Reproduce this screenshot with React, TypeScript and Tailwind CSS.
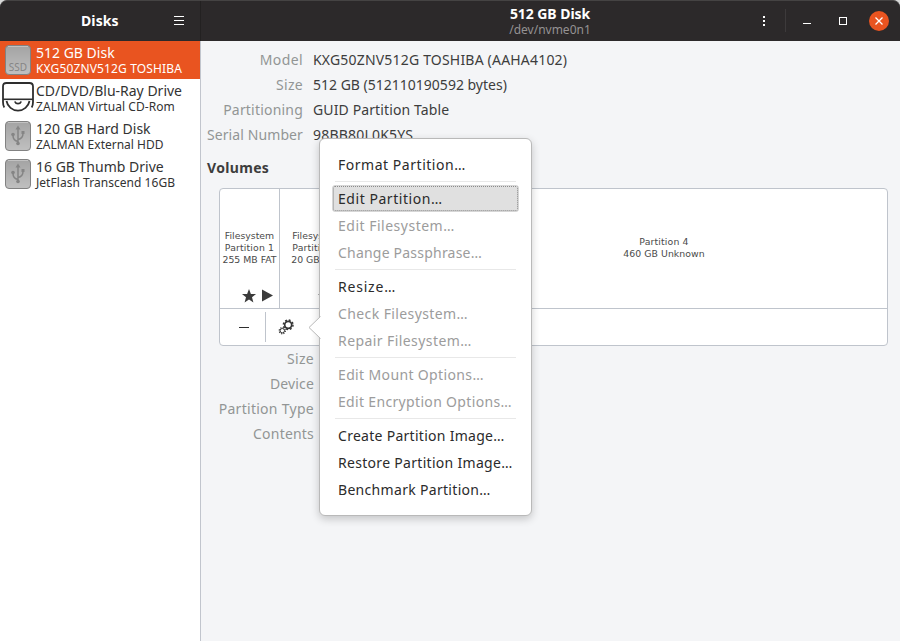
import React from "react";

type Drive = { name: string; model: string; icon: "ssd" | "optical" | "usb"; modelCls: string };

const drives: Drive[] = [
  { name: "512 GB Disk", model: "KXG50ZNV512G TOSHIBA", icon: "ssd", modelCls: "tracking-[0.14px]" },
  { name: "CD/DVD/Blu-Ray Drive", model: "ZALMAN Virtual CD-Rom", icon: "optical", modelCls: "tracking-[0.05px]" },
  { name: "120 GB Hard Disk", model: "ZALMAN External HDD", icon: "usb", modelCls: "tracking-[0px]" },
  { name: "16 GB Thumb Drive", model: "JetFlash Transcend 16GB", icon: "usb", modelCls: "tracking-[0.04px]" },
];

function DriveIcon({ kind }: { kind: Drive["icon"] }) {
  if (kind === "optical") {
    return (
      <svg width="36" height="38" viewBox="0 0 36 38" fill="none" stroke="#2e2e2e">
        <path d="M4.300 28.500Q3 26.500 3 23V7.500Q3 4 6.500 4h23Q33 4 33 7.500V23q0 3.500-1.300 5.500" strokeWidth="1.800" />
        <path d="M3 20.300h30" strokeWidth="1.600" />
        <path d="M6.500 22a11.700 11.800 0 0 0 23 0" strokeWidth="1.800" />
        <path d="M14.800 22.500a3.400 3.200 0 0 0 6.400 0" strokeWidth="1.800" />
      </svg>
    );
  }
  return (
    <svg width="36" height="38" viewBox="0 0 36 38">
      <defs>
        <linearGradient id={"case-" + kind} x1="0" y1="0" x2="0" y2="1">
          <stop offset="0" stopColor="#a3a3a3" />
          <stop offset="1" stopColor="#c0c0c0" />
        </linearGradient>
      </defs>
      <rect x="5.500" y="4.500" width="25" height="29" rx="3.500" fill={"url(#case-" + kind + ")"} stroke="#828282" />
      <path d="M8 5.500h20" stroke="#c2c2c2" />
      {kind === "ssd" ? (
        <text x="18" y="30" textAnchor="middle" fontSize="10" fill="#858585" fontFamily="Noto Sans, sans-serif">SSD</text>
      ) : (
        <g stroke="#858585" fill="none" strokeWidth="1.500">
          <path d="M18 11v15M18 24.500q-5-1-5-6M18 22.500q5-1 5-6" />
          <circle cx="18" cy="26.500" r="1.800" fill="#858585" stroke="none" />
          <path d="M15.500 12.500L18 8.500l2.500 4z" fill="#858585" stroke="none" />
          <circle cx="13" cy="17.500" r="1.800" fill="#858585" stroke="none" />
          <path d="M21.500 14h3v3h-3z" fill="#858585" stroke="none" />
        </g>
      )}
    </svg>
  );
}

function Header() {
  return (
    <header className="flex h-[41px] shrink-0 rounded-t-[7px] border-t border-[#454343] bg-[#2c292a] text-white">
      <div className="flex w-[201px] items-center border-r border-[#232121] pl-[81px]">
        <h1 className="w-[92px] text-[14px] leading-5 font-bold tracking-[0.1px]">Disks</h1>
        <svg width="12" height="12" stroke="#fff" strokeWidth="1"><path d="M1 1.500h10M1 5.500h10M1 9.500h10" /></svg>
      </div>
      <div className="flex flex-1 pl-[249px]">
        <div className="flex w-[200px] flex-col items-center pt-[4px]">
          <div className="text-[14px] leading-[17px] font-bold tracking-[-0.06px] whitespace-nowrap">512 GB Disk</div>
          <div className="text-[12px] leading-[15px] whitespace-nowrap text-[#959293]">/dev/nvme0n1</div>
        </div>
        <div className="flex flex-1 pl-[106px]">
          <svg width="138" height="40" className="shrink-0" fill="none">
            <path d="M7 15h2v2h-2zM7 19h2v2h-2zM7 23h2v2h-2z" fill="#fff" />
            <path d="M29.500 8v23" stroke="#3d3a3b" />
            <path d="M47 22.500h8" stroke="#fff" />
            <rect x="83.500" y="16.500" width="7" height="7" stroke="#fff" />
            <circle cx="123" cy="20" r="10" fill="#e95420" />
            <path d="M119.500 16.500l7 7M126.500 16.500l-7 7" stroke="#fff" strokeWidth="1.300" />
          </svg>
        </div>
      </div>
    </header>
  );
}

function Sidebar() {
  return (
    <aside className="w-[201px] shrink-0 border-r border-[#c1c5cd] bg-white">
      {drives.map((d, i) => (
        <div key={d.name} className={i === 0 ? "flex h-[38px] bg-[#e95420] text-white" : "flex h-[38px] text-[#333333]"}>
          <DriveIcon kind={d.icon} />
          <div className="whitespace-nowrap">
            <div className="mt-[3px] h-[18px] text-[14px] leading-[18px]">{d.name}</div>
            <div className={"text-[12px] leading-[14px] " + d.modelCls}>{d.model}</div>
          </div>
        </div>
      ))}
    </aside>
  );
}

const details = [
  ["Model", "KXG50ZNV512G TOSHIBA (AAHA4102)", "tracking-[0.19px]", "tracking-[0.4px]"],
  ["Size", "512 GB (512110190592 bytes)", "tracking-[0px]", "tracking-[0.3px]"],
  ["Partitioning", "GUID Partition Table", "tracking-[0.12px]", "tracking-[0.2px]"],
  ["Serial Number", "98BB80L0K5YS", "tracking-[0.2px]", "tracking-[0.1px]"],
];

const partitionFields = [
  ["Size", "tracking-[0.3px]"],
  ["Device", "tracking-[0.15px]"],
  ["Partition Type", "tracking-[0.28px]"],
  ["Contents", "tracking-[0.2px]"],
];

function Star() {
  return (
    <svg width="14" height="14" viewBox="0 0 14 14">
      <path d="M7 0l1.900 4.900 5.100.2-4 3.200 1.400 5.200L7 10.600l-4.400 2.900L4 8.300 0 5.100l5.100-.2z" fill="#3b3b3b" />
    </svg>
  );
}

const label = "font-['DejaVu_Sans',sans-serif] text-[9.33px] leading-[12px] text-center whitespace-nowrap text-[#4a4a4a]";

function Volumes() {
  return (
    <div className="ml-[18px] h-[158px] w-[669px] rounded-[4px] border border-[#bfc4cc] bg-white">
      <div className="flex h-[120px] border-b border-[#bfc4cc]">
        <div className="flex w-[60px] flex-col border-r border-[#bfc4cc]">
          <div className={"mt-[41px] " + label}>
            <div>Filesystem</div>
            <div className="tracking-[0.15px]">Partition 1</div>
            <div>255 MB FAT</div>
          </div>
          <div className="mt-[23px] flex gap-[6px] pl-[22px]">
            <Star />
            <svg width="11" height="13"><path d="M0 .5l11 6L0 12.500z" fill="#3b3b3b" /></svg>
          </div>
        </div>
        <div className="flex w-[76px] flex-col border-r border-[#bfc4cc]">
          <div className={"mt-[41px] " + label}>
            <div className="-ml-px">Filesystem</div>
            <div className="-ml-px tracking-[0.15px]">Partition 2</div>
            <div>20 GB Ext4</div>
          </div>
          <div className="mt-[23px] flex pl-[38px]"><Star /></div>
        </div>
        <div className="w-[85px] border-r border-[#bfc4cc]" />
        <div className={"flex-1 pt-[47px] " + label}>
          <div className="tracking-[0.15px]">Partition 4</div>
          <div className="tracking-[0.05px]">460 GB Unknown</div>
        </div>
      </div>
      <div className="flex h-[36px] items-center">
        <div className="flex h-[30px] w-[46px] items-center border-r border-[#bfc4cc] pl-[19px]">
          <div className="mt-px h-px w-[10px] bg-[#2e2e2e]" />
        </div>
        <svg className="ml-[12px]" width="18" height="18" fill="none" stroke="#353535">
          <circle cx="10.200" cy="6.800" r="3.500" strokeWidth="1.700" />
          <circle cx="10.200" cy="6.800" r="4.800" strokeWidth="1.500" strokeDasharray="1.885 1.885" />
          <circle cx="4.300" cy="12.700" r="2.200" strokeWidth="1" />
          <circle cx="4.300" cy="12.700" r="3.100" strokeWidth="1.200" strokeDasharray="1.217 1.217" />
        </svg>
      </div>
    </div>
  );
}

const menu: [string, boolean, string][][] = [
  [["Format Partition…", true, "tracking-[0.53px]"]],
  [
    ["Edit Partition…", true, "tracking-[0.55px]"],
    ["Edit Filesystem…", false, "tracking-[0.5px]"],
    ["Change Passphrase…", false, "tracking-[0.21px]"],
  ],
  [
    ["Resize…", true, "tracking-[0.8px]"],
    ["Check Filesystem…", false, "tracking-[0.4px]"],
    ["Repair Filesystem…", false, "tracking-[0.42px]"],
  ],
  [
    ["Edit Mount Options…", false, "tracking-[0.36px]"],
    ["Edit Encryption Options…", false, "tracking-[0.33px]"],
  ],
  [
    ["Create Partition Image…", true, "tracking-[0.28px]"],
    ["Restore Partition Image…", true, "tracking-[0.3px]"],
    ["Benchmark Partition…", true, "tracking-[0.31px]"],
  ],
];

function Popover() {
  return (
    <div className="absolute top-[138px] left-[319px] h-[378px] w-[213px] rounded-[6px] border border-[#b9b9b9] bg-white px-[12px] pt-[12px] shadow-[0_3px_8px_rgba(0,0,0,0.2)]">
      <svg className="absolute top-[177px] -left-[12px]" width="13" height="24">
        <path d="M12.500 .500L1 11.500 12.500 22.500" fill="#fff" stroke="#b9b9b9" />
        <path d="M12.500 2v20" stroke="#fff" />
      </svg>
      {menu.map((group, g) => (
        <div key={g}>
          {g > 0 && <div className="mx-[3px] my-[3px] h-px bg-[#e8e8e8]" />}
          {group.map(([text, enabled, spacing]) => (
            <div
              key={text}
              className={
                "h-[27px] rounded-[3px] border px-[5px] leading-[25px] whitespace-nowrap " +
                spacing +
                (text === "Edit Partition…"
                  ? " border-[#d6d6d6] bg-[#e0e0e0] outline-1 -outline-offset-2 outline-dotted outline-[#8c8c8c]"
                  : " border-transparent") +
                (enabled ? " text-[#2b2b2b]" : " text-[#9c9c9c]")
              }
            >
              {text}
            </div>
          ))}
        </div>
      ))}
    </div>
  );
}

export default function App() {
  return (
    <div className="relative flex h-[641px] w-[900px] flex-col overflow-hidden bg-[#d8d8d8] font-['Noto_Sans',sans-serif] text-[14px]">
      <Header />
      <div className="flex flex-1 bg-[#f4f5f7]">
        <Sidebar />
        <main className="pt-[6px] text-[#3d3d3d]">
          {details.map(([k, v, spacing, keySpacing]) => (
            <div key={k} className="flex h-[25px] items-center leading-5 whitespace-nowrap">
              <span className={"mr-[10px] w-[102px] text-right text-[#929595] " + keySpacing}>{k}</span>
              <span className={spacing}>{v}</span>
            </div>
          ))}
          <h2 className="mt-[11px] mb-[10px] pl-[6px] text-[14px] leading-5 font-bold tracking-[0.33px]">Volumes</h2>
          <Volumes />
          {partitionFields.map(([k, spacing]) => (
            <div key={k} className={"h-[25px] w-[113px] text-right leading-[25px] whitespace-nowrap text-[#929595] " + spacing}>
              {k}
            </div>
          ))}
        </main>
      </div>
      <Popover />
    </div>
  );
}
